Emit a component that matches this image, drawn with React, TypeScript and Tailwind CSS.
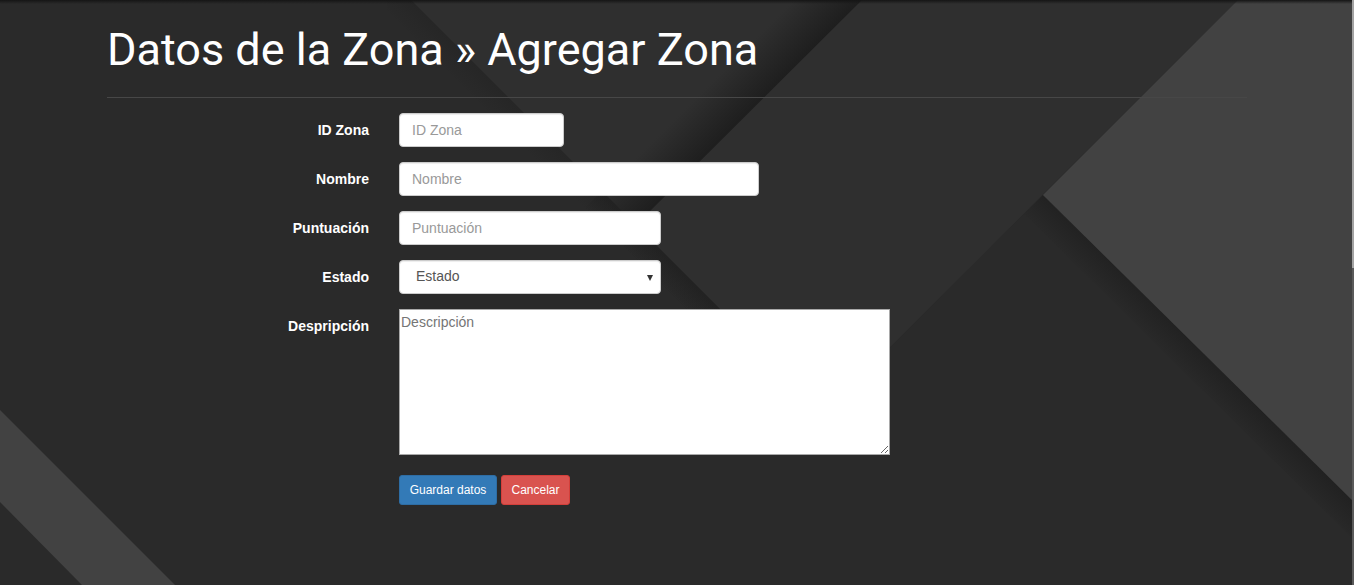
import { useState } from 'react'

const sans = "font-['Liberation_Sans',Arial,sans-serif]"

function Background() {
  return (
    <svg className="absolute inset-0 h-full w-full" viewBox="0 0 1354 585" preserveAspectRatio="none">
      <defs>
        <linearGradient id="band" gradientUnits="userSpaceOnUse" x1="431" y1="431" x2="397" y2="397">
          <stop offset="0" stopColor="#1c1c1c" stopOpacity="0.9" />
          <stop offset="1" stopColor="#1c1c1c" stopOpacity="0" />
        </linearGradient>
        <linearGradient id="edge" gradientUnits="userSpaceOnUse" x1="620" y1="205" x2="600" y2="225">
          <stop offset="0" stopColor="#1c1c1c" stopOpacity="0.3" />
          <stop offset="1" stopColor="#1c1c1c" stopOpacity="0" />
        </linearGradient>
        <linearGradient id="edge2" gradientUnits="userSpaceOnUse" x1="680" y1="265" x2="660" y2="285">
          <stop offset="0" stopColor="#1c1c1c" stopOpacity="0.45" />
          <stop offset="1" stopColor="#1c1c1c" stopOpacity="0" />
        </linearGradient>
        <linearGradient id="rshade" gradientUnits="userSpaceOnUse" x1="1200" y1="350" x2="1178" y2="372">
          <stop offset="0" stopColor="#1c1c1c" stopOpacity="0.6" />
          <stop offset="1" stopColor="#1c1c1c" stopOpacity="0" />
        </linearGradient>
        <linearGradient id="top" x1="0" y1="0" x2="0" y2="1">
          <stop offset="0" stopColor="#151515" />
          <stop offset="1" stopColor="#151515" stopOpacity="0" />
        </linearGradient>
      </defs>
      <rect width="1354" height="585" fill="#2a2a2a" />
      <polygon points="411,0 1238,0 824,413" fill="#2f2f2f" />
      <polygon points="794,0 862,0 636,225 602,191" fill="url(#band)" />
      <polygon points="411,0 824,413 800,437 387,24 387,0" fill="url(#edge)" />
      <polygon points="602,191 760,349 736,373 578,215" fill="url(#edge2)" />
      <polygon points="1043,195 1354,502 1354,540 1024,214" fill="url(#rshade)" />
      <polygon points="1238,0 1354,0 1354,502 1043,195" fill="#424242" />
      <polygon points="0,410 175,585 82,585 0,502" fill="#424242" />
      <rect width="1354" height="4" fill="url(#top)" />
      <rect x="1352" y="0" width="2" height="268" fill="#a3a3a3" />
      <rect x="1352" y="268" width="2" height="317" fill="#5a5a5a" />
    </svg>
  )
}

function Label({ children }: { children: React.ReactNode }) {
  return (
    <label className={`${sans} pt-[7px] text-right text-[14px] font-bold leading-5 text-white`}>
      {children}
    </label>
  )
}

const inputCls = `${sans} block h-[34px] rounded-[4px] border border-[#ccc] bg-white px-3 text-[14px] text-[#555] shadow-[inset_0_1px_1px_rgba(0,0,0,0.075)] outline-none placeholder:text-[#999]`

export default function App() {
  const [estado, setEstado] = useState('')

  return (
    <div className="relative min-h-screen overflow-hidden bg-[#2a2a2a]">
      <Background />
      <div className="relative mx-auto w-[1140px]">
        <h1 className="pt-[25px] font-['Roboto',sans-serif] text-[45px] font-normal leading-[1.1] text-white">
          Datos de la Zona » Agregar Zona
        </h1>
        <div className="mt-[22px] h-px bg-[#474747]" />

        <form className="mt-[15px] grid grid-cols-[262px_1fr] gap-x-[30px] gap-y-[15px]">
          <Label>ID Zona</Label>
          <input className={`${inputCls} w-[165px]`} placeholder="ID Zona" />

          <Label>Nombre</Label>
          <input className={`${inputCls} w-[360px]`} placeholder="Nombre" />

          <Label>Puntuación</Label>
          <input className={`${inputCls} w-[262px]`} placeholder="Puntuación" />

          <Label>Estado</Label>
          <div className="relative w-[262px]">
            <select
              value={estado}
              onChange={(e) => setEstado(e.target.value)}
              className={`${inputCls} w-full appearance-none pl-[16px] text-[#333]`}
            >
              <option value="">Estado</option>
              <option value="1">Activo</option>
              <option value="0">Inactivo</option>
            </select>
            <svg className="pointer-events-none absolute right-[8px] top-[14px]" width="6" height="7" viewBox="0 0 6 7">
              <polygon points="0,1 6,1 3,7" fill="#333" />
            </svg>
          </div>

          <Label>Despripción</Label>
          <textarea
            className={`${sans} block h-[146px] w-[491px] border border-[#a9a9a9] bg-white px-[1px] pt-[2px] text-[14px] leading-[20px] text-[#333] outline-none placeholder:text-[#757575]`}
            placeholder="Descripción"
          />

          <div />
          <div className="mt-[5px] flex gap-[4px]">
            <button type="button" className={`${sans} h-[30px] w-[98px] rounded-[3px] border border-[#2e6da4] bg-[#337ab7] text-[12px] text-white`}>
              Guardar datos
            </button>
            <button type="button" className={`${sans} h-[30px] w-[69px] rounded-[3px] border border-[#d43f3a] bg-[#d9534f] text-[12px] text-white`}>
              Cancelar
            </button>
          </div>
        </form>
      </div>
    </div>
  )
}
